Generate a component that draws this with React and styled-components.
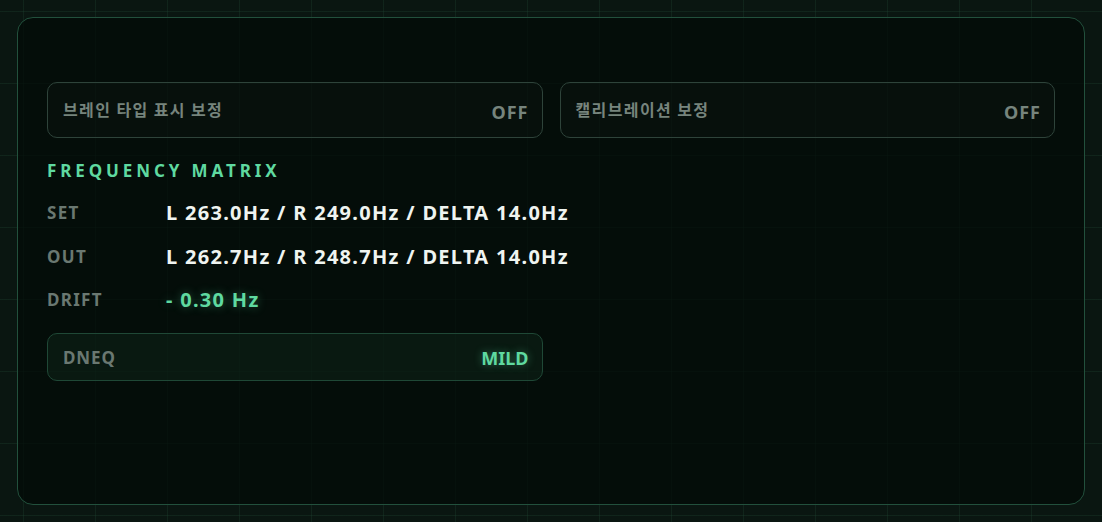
import React from "react";
import styled, { createGlobalStyle } from "styled-components";

const palette = {
  page: "#0a1611",
  card: "rgba(3, 10, 7, 0.72)",
  grid: "rgba(40, 90, 64, 0.22)",
  cardBorder: "#22503c",
  toggleBorder: "#2e433a",
  muted: "#76847d",
  label: "#6a7871",
  white: "#eff4f0",
  green: "#5fd9a0",
};

const GlobalStyle = createGlobalStyle`
  html, body {
    margin: 0;
    padding: 0;
    background-color: ${palette.page};
    background-image:
      linear-gradient(to right, ${palette.grid} 1px, transparent 1px),
      linear-gradient(to bottom, ${palette.grid} 1px, transparent 1px);
    background-size: 72px 72px;
    background-position: 23px 11px;
    font-family: "Noto Sans", "Noto Sans CJK KR", sans-serif;
  }
`;

const Page = styled.div`
  padding: 17px;
  height: 522px;
  box-sizing: border-box;
`;

const Card = styled.div`
  height: 488px;
  box-sizing: border-box;
  border: 1.5px solid ${palette.cardBorder};
  border-radius: 16px;
  background: ${palette.card};
  padding: 64px 29px 0;
`;

const TwoCol = styled.div`
  display: grid;
  grid-template-columns: 1fr 1fr;
  gap: 17px;
`;

const Toggle = styled.div`
  height: 56px;
  box-sizing: border-box;
  display: flex;
  align-items: center;
  justify-content: space-between;
  padding: 0 13px 0 15px;
  border: 1.5px solid ${palette.toggleBorder};
  border-radius: 10px;
  background: rgba(255, 255, 255, 0.015);
`;

const ToggleLabel = styled.span`
  color: ${palette.muted};
  font-size: 16px;
  font-weight: 700;
  letter-spacing: 1.4px;
  font-family: "Noto Sans CJK KR", "Noto Sans", sans-serif;
  margin-top: -3px;
`;

const ToggleState = styled.span`
  color: ${(p) => (p.$on ? palette.green : palette.muted)};
  font-size: 18px;
  font-weight: 700;
  letter-spacing: ${(p) => (p.$on ? "0px" : "1px")};
  margin-top: 3px;
  text-shadow: ${(p) => (p.$on ? "0 0 8px rgba(95,217,160,0.45)" : "none")};
`;

const Section = styled.div`
  margin-top: 22px;
`;

const Title = styled.div`
  color: ${palette.green};
  font-size: 17px;
  font-weight: 700;
  letter-spacing: 3.9px;
  line-height: 22px;
  margin-top: 1px;
  margin-bottom: 9px;
`;

const Row = styled.div`
  display: grid;
  grid-template-columns: 119px 1fr;
  align-items: center;
  height: 43.5px;
`;

const RowLabel = styled.span`
  color: ${palette.label};
  font-size: 17px;
  font-weight: 700;
  letter-spacing: 1.3px;
`;

const RowValue = styled.span`
  color: ${(p) => (p.$accent ? palette.green : palette.white)};
  font-size: 20px;
  font-weight: 700;
  letter-spacing: 1.3px;
  text-shadow: ${(p) =>
    p.$accent ? "0 0 10px rgba(95,217,160,0.4)" : "none"};
`;

const Meter = styled.div`
  height: 48px;
  box-sizing: border-box;
  display: flex;
  align-items: center;
  justify-content: space-between;
  padding: 0 13px 0 15px;
  border: 1.5px solid #1f4836;
  border-radius: 10px;
  background: rgba(20, 48, 34, 0.35);
  margin-top: 11px;
`;

const MeterLabel = styled.span`
  color: ${palette.label};
  font-size: 17px;
  font-weight: 700;
  letter-spacing: 0.9px;
  margin-top: 2px;
`;

const toggles = [
  { label: "브레인 타입 표시 보정", on: false },
  { label: "캘리브레이션 보정", on: false },
];

const rows = [
  { label: "SET", value: "L 263.0Hz / R 249.0Hz / DELTA 14.0Hz" },
  { label: "OUT", value: "L 262.7Hz / R 248.7Hz / DELTA 14.0Hz" },
  { label: "DRIFT", value: "- 0.30 Hz", accent: true },
];

export default function App() {
  return (
    <>
      <GlobalStyle />
      <Page>
        <Card>
          <TwoCol>
            {toggles.map((t) => (
              <Toggle key={t.label}>
                <ToggleLabel>{t.label}</ToggleLabel>
                <ToggleState $on={t.on}>{t.on ? "ON" : "OFF"}</ToggleState>
              </Toggle>
            ))}
          </TwoCol>

          <Section>
            <Title>FREQUENCY MATRIX</Title>
            {rows.map((r) => (
              <Row key={r.label}>
                <RowLabel>{r.label}</RowLabel>
                <RowValue $accent={r.accent}>{r.value}</RowValue>
              </Row>
            ))}
          </Section>

          <TwoCol>
            <Meter>
              <MeterLabel>DNEQ</MeterLabel>
              <ToggleState $on>MILD</ToggleState>
            </Meter>
          </TwoCol>
        </Card>
      </Page>
    </>
  );
}
